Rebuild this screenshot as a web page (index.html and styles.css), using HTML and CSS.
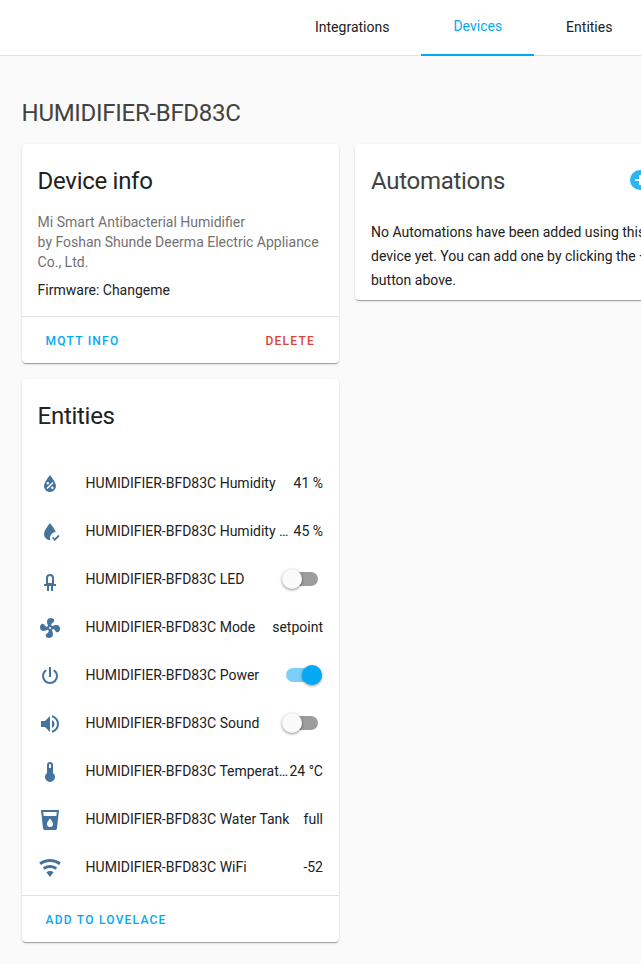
FILE: index.html
```
<!DOCTYPE html>
<html lang="en">
<head>
<meta charset="utf-8">
<title>HUMIDIFIER-BFD83C</title>
<link rel="stylesheet" href="styles.css">
</head>
<body>
<header class="toolbar">
  <nav class="tabs">
    <a class="tab">Integrations</a>
    <a class="tab active">Devices</a>
    <a class="tab">Entities</a>
  </nav>
</header>
<main class="page">
  <h1 class="title">HUMIDIFIER-BFD83C</h1>
  <div class="columns">
    <div class="column main-column">
      <section class="card">
        <h2 class="card-title">Device info</h2>
        <div class="info">
          <div class="secondary">Mi Smart Antibacterial Humidifier</div>
          <div class="secondary">by Foshan Shunde Deerma Electric Appliance Co., Ltd.</div>
          <div class="firmware">Firmware: Changeme</div>
        </div>
        <div class="actions"><button class="btn">MQTT info</button><button class="btn danger">Delete</button></div>
      </section>
      <section class="card">
        <h2 class="card-title">Entities</h2>
        <div class="entities">
          <div class="row">
            <svg class="icon" viewBox="0 0 24 24"><path d="M12,3.25C12,3.25 6,10 6,14C6,17.32 8.69,20 12,20A6,6 0 0,0 18,14C18,10 12,3.25 12,3.25M14.47,9.97L15.53,11.03L9.53,17.03L8.47,15.97M9.75,10A1.25,1.25 0 0,1 11,11.25A1.25,1.25 0 0,1 9.75,12.5A1.25,1.25 0 0,1 8.5,11.25A1.25,1.25 0 0,1 9.75,10M14.25,14.5A1.25,1.25 0 0,1 15.5,15.75A1.25,1.25 0 0,1 14.25,17A1.25,1.25 0 0,1 13,15.75A1.25,1.25 0 0,1 14.25,14.5Z"/></svg>
            <span class="name">HUMIDIFIER-BFD83C Humidity</span><span class="state">41 %</span>
          </div>
          <div class="row">
            <svg class="icon" viewBox="0 0 24 24"><path d="M12,3.25C12,3.25 6,10 6,14C6,17.31 8.69,20 12,20C12.1,20 12.2,20 12.3,19.97C12.1,19.34 12,18.68 12,18C12,14.82 14.5,12.2 17.7,12C16.5,8.3 12,3.25 12,3.25M20.34,14.84L16.75,18.43L15.16,16.84L14,18L16.75,21L21.5,16.25Z"/></svg>
            <span class="name">HUMIDIFIER-BFD83C Humidity Setpoint</span><span class="state">45 %</span>
          </div>
          <div class="row">
            <svg class="icon" viewBox="0 0 24 24"><path d="M12,6A4,4 0 0,0 8,10V16H6V18H9V23H11V18H13V23H15V18H18V16H16V10A4,4 0 0,0 12,6M12,8A2,2 0 0,1 14,10V15H10V10A2,2 0 0,1 12,8Z"/></svg>
            <span class="name">HUMIDIFIER-BFD83C LED</span><span class="switch"></span>
          </div>
          <div class="row">
            <svg class="icon" viewBox="0 0 24 24"><path d="M12,11A1,1 0 0,0 11,12A1,1 0 0,0 12,13A1,1 0 0,0 13,12A1,1 0 0,0 12,11M12.5,2C17,2 17.11,5.57 14.75,6.75C13.76,7.24 13.32,8.29 13.13,9.22C13.61,9.42 14.03,9.73 14.35,10.13C18.05,8.13 22.03,8.92 22.03,12.5C22.03,17 18.46,17.1 17.28,14.73C16.78,13.74 15.72,13.3 14.79,13.11C14.59,13.59 14.28,14 13.88,14.34C15.87,18.03 15.08,22 11.5,22C7,22 6.91,18.42 9.27,17.24C10.25,16.75 10.69,15.71 10.89,14.79C10.4,14.59 9.97,14.27 9.65,13.87C5.96,15.85 2,15.07 2,11.5C2,7 5.56,6.89 6.74,9.26C7.24,10.25 8.29,10.68 9.22,10.87C9.41,10.39 9.73,9.97 10.14,9.65C8.15,5.96 8.94,2 12.5,2Z"/></svg>
            <span class="name">HUMIDIFIER-BFD83C Mode</span><span class="state">setpoint</span>
          </div>
          <div class="row">
            <svg class="icon" viewBox="0 0 24 24"><path d="M16.56,5.44L15.11,6.89C16.84,7.94 18,9.83 18,12A6,6 0 0,1 12,18A6,6 0 0,1 6,12C6,9.83 7.16,7.94 8.88,6.88L7.44,5.44C5.36,6.88 4,9.28 4,12A8,8 0 0,0 12,20A8,8 0 0,0 20,12C20,9.28 18.64,6.88 16.56,5.44M13,3H11V13H13"/></svg>
            <span class="name">HUMIDIFIER-BFD83C Power</span><span class="switch on"></span>
          </div>
          <div class="row">
            <svg class="icon" viewBox="0 0 24 24"><path d="M14,3.23V5.29C16.89,6.15 19,8.83 19,12C19,15.17 16.89,17.84 14,18.7V20.77C18,19.86 21,16.28 21,12C21,7.72 18,4.14 14,3.23M16.5,12C16.5,10.23 15.5,8.71 14,7.97V16C15.5,15.29 16.5,13.76 16.5,12M3,9V15H7L12,20V4L7,9H3Z"/></svg>
            <span class="name">HUMIDIFIER-BFD83C Sound</span><span class="switch"></span>
          </div>
          <div class="row">
            <svg class="icon" viewBox="0 0 24 24"><path d="M15,13V5A3,3 0 0,0 9,5V13A5,5 0 1,0 15,13M12,4A1,1 0 0,1 13,5V8H11V5A1,1 0 0,1 12,4Z"/></svg>
            <span class="name">HUMIDIFIER-BFD83C Temperature</span><span class="state">24 °C</span>
          </div>
          <div class="row">
            <svg class="icon" viewBox="0 0 24 24"><path fill-rule="evenodd" d="M18.32,8H5.67L5.23,4H18.77L18.32,8M12,19A3,3 0 0,1 9,16C9,14 12,10.6 12,10.6C12,10.6 15,14 15,16A3,3 0 0,1 12,19M3,2L5,20.23C5.13,21.23 5.97,22 7,22H17C18,22 18.87,21.23 19,20.23L21,2H3Z"/></svg>
            <span class="name">HUMIDIFIER-BFD83C Water Tank</span><span class="state">full</span>
          </div>
          <div class="row">
            <svg class="icon" viewBox="0 0 24 24"><path d="M12,21L15.6,16.2C14.6,15.45 13.35,15 12,15C10.65,15 9.4,15.45 8.4,16.2L12,21M12,3C7.95,3 4.21,4.34 1.2,6.6L3,9C5.5,7.12 8.62,6 12,6C15.38,6 18.5,7.12 21,9L22.8,6.6C19.79,4.34 16.05,3 12,3M12,9C9.3,9 6.81,9.89 4.8,11.4L6.6,13.8C8.1,12.67 9.97,12 12,12C14.03,12 15.9,12.67 17.4,13.8L19.2,11.4C17.19,9.89 14.7,9 12,9Z"/></svg>
            <span class="name">HUMIDIFIER-BFD83C WiFi</span><span class="state">-52</span>
          </div>
        </div>
        <div class="actions"><button class="btn">Add to Lovelace</button></div>
      </section>
    </div>
    <div class="column">
      <section class="card">
        <div class="card-header">
          <h2 class="card-title muted">Automations</h2>
          <svg class="add" viewBox="0 0 24 24"><path d="M17,13H13V17H11V13H7V11H11V7H13V11H17M12,2A10,10 0 0,0 2,12A10,10 0 0,0 12,22A10,10 0 0,0 22,12A10,10 0 0,0 12,2Z"/></svg>
        </div>
        <p class="empty">No Automations have been added using this device yet. You can add one by clicking the + button above.</p>
      </section>
    </div>
  </div>
</main>
</body>
</html>
```
FILE: styles.css
```
* { box-sizing: border-box; }
html { overflow: hidden; }
body {
  margin: 0;
  min-height: 964px;
  background: #fafafa;
  color: #212121;
  font: 14px/20px Roboto, "Liberation Sans", sans-serif;
}
.toolbar {
  height: 56px;
  background: #fff;
  border-bottom: 1px solid #e0e0e0;
}
.tabs { display: flex; height: 56px; padding-left: 283px; }
.tab {
  flex: none;
  display: flex;
  align-items: center;
  height: 56px;
  padding: 0 32px 2px;
}
.tab.active {
  color: #03a9f4;
  padding-bottom: 2px;
  border-bottom: 2px solid #03a9f4;
}
.page { padding: 41px 0 0 21.6px; }
.title {
  margin: 0 0 15px;
  font-size: 24px;
  line-height: 32px;
  font-weight: 400;
  letter-spacing: -0.288px;
  color: #424242;
}
.columns { display: flex; gap: 16px; align-items: flex-start; }
.column { flex: none; width: 317px; display: flex; flex-direction: column; gap: 16px; }
.main-column { width: 317.4px; }
.card {
  background: #fff;
  border-radius: 4px;
  box-shadow: 0 2px 1px -1px rgba(0,0,0,.2), 0 1px 1px 0 rgba(0,0,0,.14), 0 1px 3px 0 rgba(0,0,0,.12);
}
.card-title {
  margin: 0;
  padding: 13px 16px 15px;
  font-size: 24px;
  line-height: 48px;
  font-weight: 400;
  letter-spacing: -0.288px;
}
.info { height: 92px; margin-top: -8px; padding: 0 16px; }
.info + .actions { margin-top: 12px; }
.secondary { color: #727272; }
.firmware { margin-top: 8px; }
.actions {
  display: flex;
  justify-content: space-between;
  align-items: center;
  height: 47px;
  padding: 2px 16px 0;
  border-top: 1px solid #e0e0e0;
}
.btn {
  border: 0;
  padding: 0 8px;
  background: none;
  color: #03a9f4;
  font: 500 12px/36px Roboto, "Liberation Sans", sans-serif;
  letter-spacing: 1.23px;
  text-transform: uppercase;
}
.btn.danger { color: #db4437; }
.entities { padding: 4px 16px; }
.row { display: flex; align-items: center; height: 48px; }
.icon { flex: none; width: 24px; height: 24px; margin: 2px 24px 0 .4px; fill: #44739e; }
.name {
  flex: 1;
  min-width: 0;
  margin-left: -.4px;
  overflow: hidden;
  white-space: nowrap;
  text-overflow: ellipsis;
}
.state { flex: none; }
.switch {
  position: relative;
  flex: none;
  width: 32px;
  height: 14px;
  margin-right: 5px;
  border-radius: 7px;
  background: #9c9c9c;
}
.switch::after {
  content: "";
  position: absolute;
  left: -4px;
  top: -3px;
  width: 20px;
  height: 20px;
  border-radius: 50%;
  background: #fafafa;
  box-shadow: 0 1px 3px rgba(0,0,0,.45);
}
.switch.on { background: #7ad0f8; }
.switch.on::after { left: 16px; background: #03a9f4; }
.card-header { display: flex; justify-content: space-between; align-items: flex-start; }
.muted { color: #424242; }
.add { width: 24px; height: 24px; margin: 24px 20px 0 0; fill: #29b6f6; }
.empty { margin: 0; padding: 0 16px 8px; line-height: 24px; }
```
